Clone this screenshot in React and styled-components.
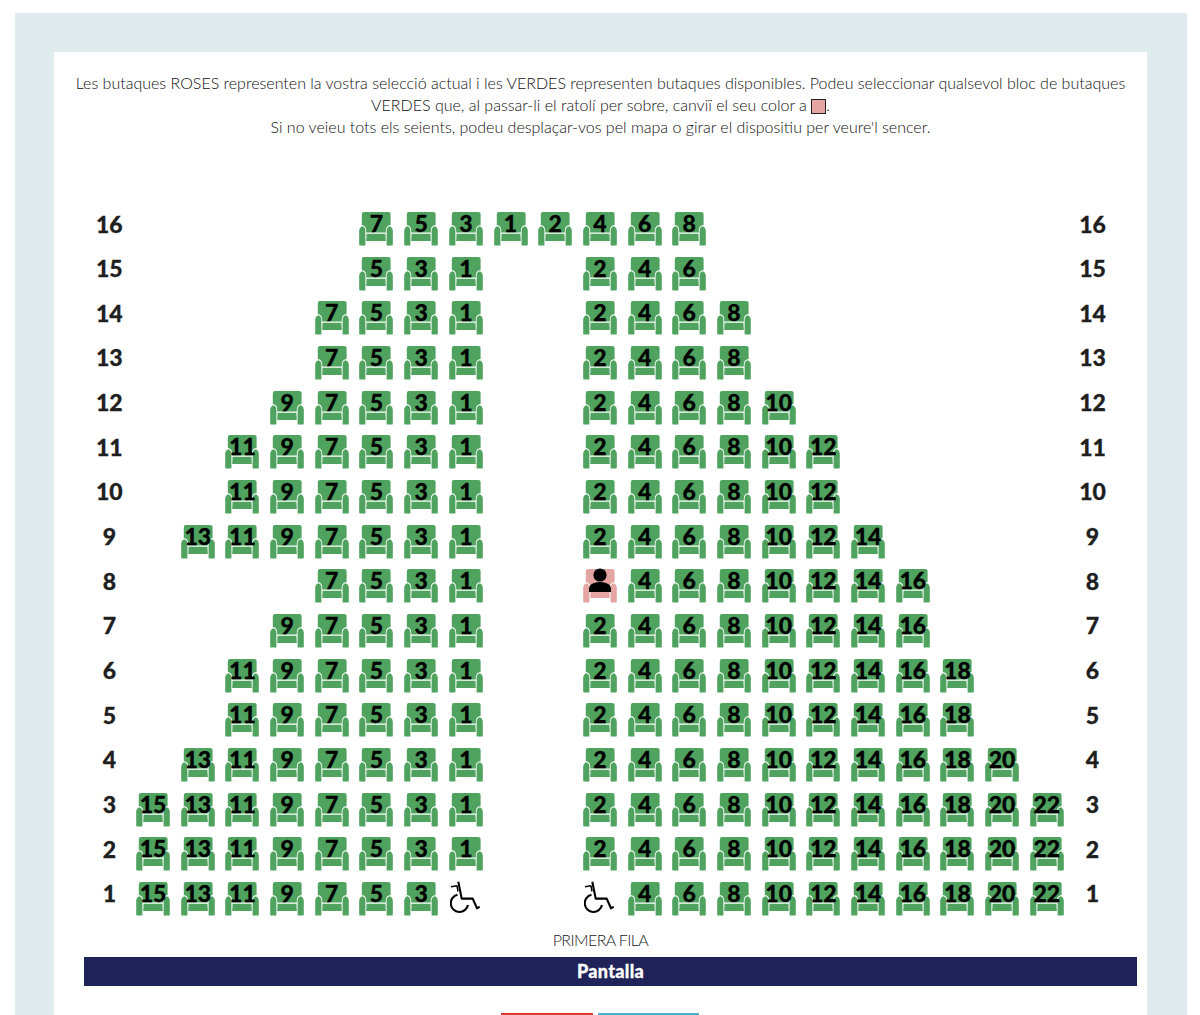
import React from "react";
import styled, { createGlobalStyle } from "styled-components";

const GlobalStyle = createGlobalStyle`
  html, body {
    margin: 0;
    padding: 0;
    height: 100%;
    overflow: hidden;
    background: #ffffff;
  }
`;

const COL = 44.7;

// seat numbers run outwards from the aisle, odd on the left, even on the right
const ROWS = [
  { n: 16, left: 7, right: 8, noAisle: true },
  { n: 15, left: 5, right: 6 },
  { n: 14, left: 7, right: 8 },
  { n: 13, left: 7, right: 8 },
  { n: 12, left: 9, right: 10 },
  { n: 11, left: 11, right: 12 },
  { n: 10, left: 11, right: 12 },
  { n: 9, left: 13, right: 14 },
  { n: 8, left: 7, right: 16, selected: 2 },
  { n: 7, left: 9, right: 16 },
  { n: 6, left: 11, right: 18 },
  { n: 5, left: 11, right: 18 },
  { n: 4, left: 13, right: 20 },
  { n: 3, left: 15, right: 22 },
  { n: 2, left: 15, right: 22 },
  { n: 1, left: 15, right: 22, wheelchair: [1, 2] },
];

const seatsFor = (row) => {
  const cells = new Array(21).fill(null);
  // row 16 closes the aisle, so its odd seats move one column towards the middle
  const firstOdd = row.noAisle ? 8 : 7;
  const firstEven = row.noAisle ? 9 : 10;
  for (let s = 1; s <= row.left; s += 2) {
    cells[firstOdd - (s - 1) / 2] = s;
  }
  for (let s = 2; s <= row.right; s += 2) {
    cells[firstEven + (s - 2) / 2] = s;
  }
  return cells;
};

const SeatIcon = ({ color }) => (
  <svg width="34" height="34" viewBox="0 0 34 34">
    <path
      fill={color}
      d="M5 0H29Q31.6 0 31.6 2.4V13Q27.2 13.4 26.8 18V20.6H7.2V18Q6.8 13.4 2.8 13V2.4Q2.8 0 5 0Z"
    />
    <path fill={color} d="M3 14.2Q6.4 15 6.4 18.6V33.6H1.4Q0.2 33.6 0.2 32.4V18.4Q0.2 15.6 3 14.2Z" />
    <path fill={color} d="M31 14.2Q33.8 15.6 33.8 18.4V32.4Q33.8 33.6 32.6 33.6H27.6V18.6Q27.6 15 31 14.2Z" />
    <path fill={color} d="M7.6 21.8H26.4L26.8 29H7.2Z" />
  </svg>
);

const WheelchairIcon = () => (
  <WheelchairSvg width="30" height="33" viewBox="0 0 30 33" fill="none" stroke="#000" strokeWidth="2.1">
    <path d="M1 5.7 7 4.7" strokeWidth="1.5" />
    <path d="M7 4.7 8 10.5" strokeWidth="1.5" />
    <path d="M8.3 0.7 11.7 17.6H22.7L27 27.3 29.7 25.7" strokeLinejoin="round" />
    <path d="M7.5 13.8A8.7 8.7 0 1 0 18 24" />
  </WheelchairSvg>
);

const PersonIcon = () => (
  <PersonSvg width="22" height="24" viewBox="0 0 22 24">
    <circle cx="11" cy="7" r="6.6" fill="#000" />
    <path fill="#000" d="M0 24V21Q0 16.4 5 15Q8 14 11 14Q14 14 17 15Q22 16.4 22 21V24Z" />
  </PersonSvg>
);

const Seat = ({ number, selected }) => (
  <SeatCell>
    <SeatIcon color={selected ? "#e5a5a2" : "#4fa35f"} />
    <SeatOverlay>{selected ? <PersonIcon /> : number}</SeatOverlay>
  </SeatCell>
);

const App = () => {
  return (
    <>
      <GlobalStyle />
      <Page>
        <Sheet>
          <Intro>
            Les butaques ROSES representen la vostra selecció actual i les VERDES representen butaques
            disponibles. Podeu seleccionar qualsevol bloc de butaques VERDES que, al passar-li el ratolí
            per sobre, canviï el seu color a <Swatch />.
            <br />
            Si no veieu tots els seients, podeu desplaçar-vos pel mapa o girar el dispositiu per veure'l
            sencer.
          </Intro>
          <SeatMap>
            {ROWS.map((row) => (
              <Row key={row.n}>
                <RowLabel>{row.n}</RowLabel>
                {seatsFor(row).map((s, i) => {
                  if (s === null) return <SeatCell key={i} />;
                  if (row.wheelchair && row.wheelchair.includes(s)) {
                    return (
                      <SeatCell key={i}>
                        <WheelchairIcon />
                      </SeatCell>
                    );
                  }
                  return <Seat key={i} number={s} selected={row.selected === s} />;
                })}
                <RowLabel>{row.n}</RowLabel>
              </Row>
            ))}
          </SeatMap>
          <FirstRow>PRIMERA FILA</FirstRow>
          <Screen>Pantalla</Screen>
          <Actions>
            <ActionButton $color="#e3342f" $width={92} />
            <ActionButton $color="#4aaed0" $width={101} />
          </Actions>
        </Sheet>
      </Page>
    </>
  );
};

export default App;

const Page = styled.div`
  box-sizing: border-box;
  height: calc(100vh - 13px);
  margin: 13px 13px 0 15px;
  padding: 39px 40px 0 39px;
  background: #e0ebed;
`;

const Sheet = styled.main`
  box-sizing: border-box;
  height: 100%;
  overflow: hidden;
  background: #ffffff;
  padding: 20px 10px 0 30px;
  font-family: "Lato", sans-serif;
  color: #111111;
`;

const Intro = styled.p`
  margin: 0 0 0 -10px;
  width: 1053px;
  font-size: 16px;
  font-weight: 300;
  line-height: 22px;
  text-align: center;
`;

const Swatch = styled.span`
  display: inline-block;
  width: 13px;
  height: 13px;
  border: 1px solid #222222;
  background: #e5a5a2;
  vertical-align: -3px;
`;

const SeatMap = styled.div`
  margin: 74px 0 0 2px;
  display: flex;
  flex-direction: column;
  gap: 10.67px;
`;

const Row = styled.div`
  display: grid;
  grid-template-columns: repeat(23, ${COL}px);
  height: 34px;
  align-items: center;
  justify-items: center;
`;

const RowLabel = styled.div`
  font-weight: 900;
  font-size: 23px;
  line-height: 24px;
  color: #1f1f1f;
  margin: -11px 0 0 2px;
  -webkit-text-stroke: 0.3px #1f1f1f;
`;

const SeatCell = styled.div`
  position: relative;
  width: 34px;
  height: 34px;
`;

const SeatOverlay = styled.span`
  position: absolute;
  left: -4px;
  right: -4px;
  top: -1px;
  height: 24px;
  display: flex;
  align-items: center;
  justify-content: center;
  font-weight: 900;
  font-size: 23px;
  color: #000000;
  -webkit-text-stroke: 0.3px #000000;
`;

const WheelchairSvg = styled.svg`
  display: block;
  margin: -1px 0 0 1px;
`;

const PersonSvg = styled.svg`
  display: block;
  margin-top: -1px;
`;

const FirstRow = styled.div`
  margin: 13px 0 0 -30px;
  width: 1093px;
  text-align: center;
  font-size: 16px;
  font-weight: 300;
  line-height: 22px;
  letter-spacing: -0.6px;
  color: #222222;
`;

const Screen = styled.div`
  margin: 6px 0 0 0;
  width: 1053px;
  height: 29px;
  background: #1f2357;
  color: #ffffff;
  text-align: center;
  font-weight: 900;
  font-size: 18px;
  line-height: 29px;
  letter-spacing: 0.3px;
  -webkit-text-stroke: 0.3px #ffffff;
`;

const Actions = styled.div`
  margin: 27px 0 0 417px;
  display: flex;
  gap: 5px;
`;

const ActionButton = styled.div`
  width: ${(p) => p.$width}px;
  height: 36px;
  border-top: 2px solid ${(p) => p.$color};
`;
